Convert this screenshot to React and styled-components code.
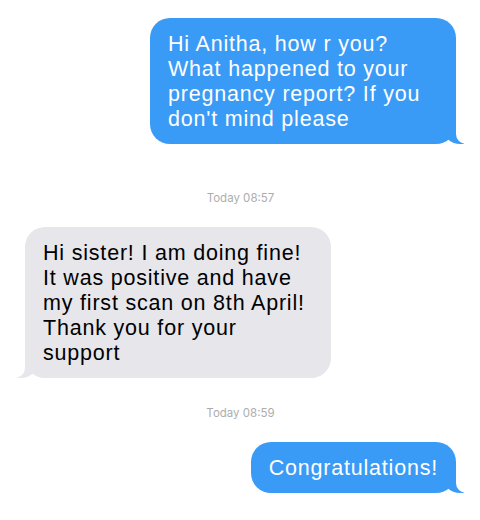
import React from "react";
import styled, { createGlobalStyle, css } from "styled-components";

const GlobalStyle = createGlobalStyle`
	body {
		margin: 0;
		background: #fff;
	}
`;

const Thread = styled.div`
	display: flex;
	flex-direction: column;
	padding: 18px 24px 20px 25px;
	font-family: "Liberation Sans", Arial, sans-serif;
`;

const BLUE = "#3a9bf6";
const GREY = "#e6e6eb";

// iMessage style tail, made of two pseudo elements
const tailRight = css`
	&::before {
		content: "";
		position: absolute;
		bottom: 0;
		right: -8px;
		width: 20px;
		height: 22px;
		background: ${BLUE};
		border-bottom-left-radius: 16px 14px;
	}
	&::after {
		content: "";
		position: absolute;
		bottom: 0;
		right: -26px;
		width: 26px;
		height: 22px;
		background: #fff;
		border-bottom-left-radius: 10px;
	}
`;

const tailLeft = css`
	&::before {
		content: "";
		position: absolute;
		bottom: 0;
		left: -8px;
		width: 20px;
		height: 22px;
		background: ${GREY};
		border-bottom-right-radius: 16px 14px;
	}
	&::after {
		content: "";
		position: absolute;
		bottom: 0;
		left: -26px;
		width: 26px;
		height: 22px;
		background: #fff;
		border-bottom-right-radius: 10px;
	}
`;

const Bubble = styled.div`
	position: relative;
	width: fit-content;
	max-width: 306px;
	box-sizing: border-box;
	padding: 14px 18px 12px;
	border-radius: 20px;
	font-size: 21.5px;
	line-height: 25px;
	letter-spacing: 0.8px;
	align-self: ${(p) => (p.$mine ? "flex-end" : "flex-start")};
	background: ${(p) => (p.$mine ? BLUE : GREY)};
	color: ${(p) => (p.$mine ? "#fff" : "#000")};
	${(p) => (p.$mine ? tailRight : tailLeft)}
`;

const Stamp = styled.div`
	margin: ${(p) => p.$top}px 0 22px;
	text-align: center;
	font-family: Inter, "Noto Sans", sans-serif;
	font-size: 11.5px;
	line-height: 14px;
	color: #adadad;
`;

export default function App() {
	return (
		<>
			<GlobalStyle />
			<Thread>
				<Bubble $mine>
					Hi Anitha, how r you? What happened to your pregnancy report? If you
					don't mind please
				</Bubble>
				<Stamp $top={47}>Today 08:57</Stamp>
				<Bubble>
					Hi sister! I am doing fine! It was positive and have my first scan on
					8th April! Thank you for your support
				</Bubble>
				<Stamp $top={28}>Today 08:59</Stamp>
				<Bubble $mine>Congratulations!</Bubble>
			</Thread>
		</>
	);
}
